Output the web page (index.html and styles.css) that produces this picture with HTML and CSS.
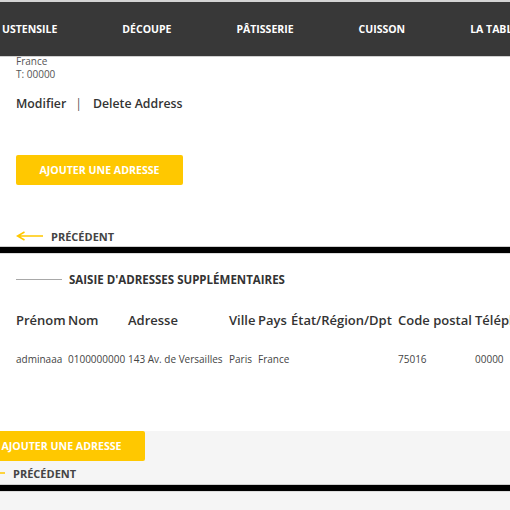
FILE: index.html
```html
<!DOCTYPE html>
<html lang="fr">
<head>
<meta charset="utf-8">
<title>Adresses</title>
<link rel="stylesheet" href="styles.css">
</head>
<body>
<nav class="nav">
  <span class="nav-item">USTENSILE</span>
  <span class="nav-item">DÉCOUPE</span>
  <span class="nav-item">PÂTISSERIE</span>
  <span class="nav-item">CUISSON</span>
  <span class="nav-item">LA TABLE</span>
</nav>
<main class="main">
  <div class="addr">
    <div>France</div>
    <div>T: 00000</div>
  </div>
  <div class="actions">
    <span>Modifier</span><span class="sep">|</span><span>Delete Address</span>
  </div>
  <button class="btn btn-first">AJOUTER UNE ADRESSE</button>
  <div class="prev">
    <svg class="arrow" width="28" height="10" viewBox="0 0 28 10"><path d="M1.5 5 H27 M8.5 1 L1.5 5 L8.5 9" fill="none" stroke="#ffc800" stroke-width="1.6"/></svg>
    <span>PRÉCÉDENT</span>
  </div>
</main>
<div class="bar"></div>
<section class="extra">
  <h2 class="heading"><span class="heading-line"></span>SAISIE D'ADRESSES SUPPLÉMENTAIRES</h2>
  <div class="grid head">
    <span>Prénom</span><span>Nom</span><span>Adresse</span><span>Ville</span><span>Pays</span><span>État/Région/Dpt</span><span>Code postal</span><span>Téléphone</span>
  </div>
  <div class="grid row">
    <span>adminaaa</span><span>0100000000</span><span>143 Av. de Versailles</span><span>Paris</span><span>France</span><span></span><span>75016</span><span>00000</span>
  </div>
</section>
<section class="footer">
  <div class="footer-inner">
    <button class="btn">AJOUTER UNE ADRESSE</button>
    <div class="prev prev-second">
      <svg class="arrow" width="28" height="10" viewBox="0 0 28 10"><path d="M1.5 5 H27 M8.5 1 L1.5 5 L8.5 9" fill="none" stroke="#ffc800" stroke-width="1.6"/></svg>
      <span>PRÉCÉDENT</span>
    </div>
  </div>
  <div class="bar bar-second"></div>
</section>
</body>
</html>
```
FILE: styles.css
```css
html, body {
  margin: 0;
  padding: 0;
  background: #fff;
  overflow: hidden;
  font-family: "Open Sans", "Liberation Sans", sans-serif;
}
.nav {
  height: 54px;
  background: #383838;
  border-top: 2px solid #d4d4d4;
  border-bottom: 1px solid #d0d0d0;
  display: flex;
  align-items: center;
  gap: 65px;
  padding-left: 2px;
  white-space: nowrap;
  overflow: hidden;
}
.nav-item {
  color: #fff;
  font-size: 10.5px;
  font-weight: 700;
  flex: none;
}
.main {
  padding: 0 16px;
  display: flex;
  flex-direction: column;
  align-items: flex-start;
}
.addr {
  margin-top: -2px;
  font-size: 10px;
  line-height: 13px;
  color: #555;
}
.actions {
  margin-top: 14px;
  font-size: 12.3px;
  line-height: 18px;
  font-weight: 600;
  color: #333;
}
.sep {
  margin: 0 11px 0 9px;
  font-weight: 400;
  color: #555;
}
.btn {
  display: block;
  width: 167px;
  height: 30px;
  border: none;
  border-radius: 2px;
  background: #ffc800;
  color: #fff;
  font-family: "Open Sans", "Liberation Sans", sans-serif;
  font-size: 10.6px;
  font-weight: 700;
  padding: 0;
  text-align: center;
}
.btn-first {
  margin-top: 42px;
}
.prev {
  margin-top: 43px;
  display: flex;
  align-items: center;
  gap: 7px;
  height: 16px;
  font-size: 11px;
  font-weight: 700;
  color: #444;
}
.arrow {
  display: block;
  flex: none;
}
.bar {
  margin-top: 2px;
  height: 6px;
  background: #000;
  border-top: 1px solid #cfcfcf;
  border-bottom: 1px solid #dcdcdc;
}
.extra {
  padding: 0 16px;
}
.heading {
  margin: 17px 0 0;
  display: flex;
  align-items: center;
  gap: 7px;
  height: 16px;
  font-size: 11.5px;
  font-weight: 700;
  color: #333;
}
.heading-line {
  width: 46px;
  height: 1px;
  background: #a8a8a8;
}
.grid {
  display: grid;
  grid-template-columns: 52px 60px 101px 29px 33px 107px 77px 60px;
  white-space: nowrap;
}
.head {
  margin-top: 24px;
  font-size: 13px;
  line-height: 18px;
  font-weight: 600;
  color: #333;
}
.row {
  margin-top: 23px;
  font-size: 10px;
  line-height: 14px;
  color: #444;
}
.footer {
  margin-top: 65px;
  background: #f5f5f5;
  height: 200px;
}
.footer-inner {
  margin-left: -22px;
}
.prev-second {
  margin-top: 4px;
}
.bar-second {
  margin-top: 3px;
}
```
